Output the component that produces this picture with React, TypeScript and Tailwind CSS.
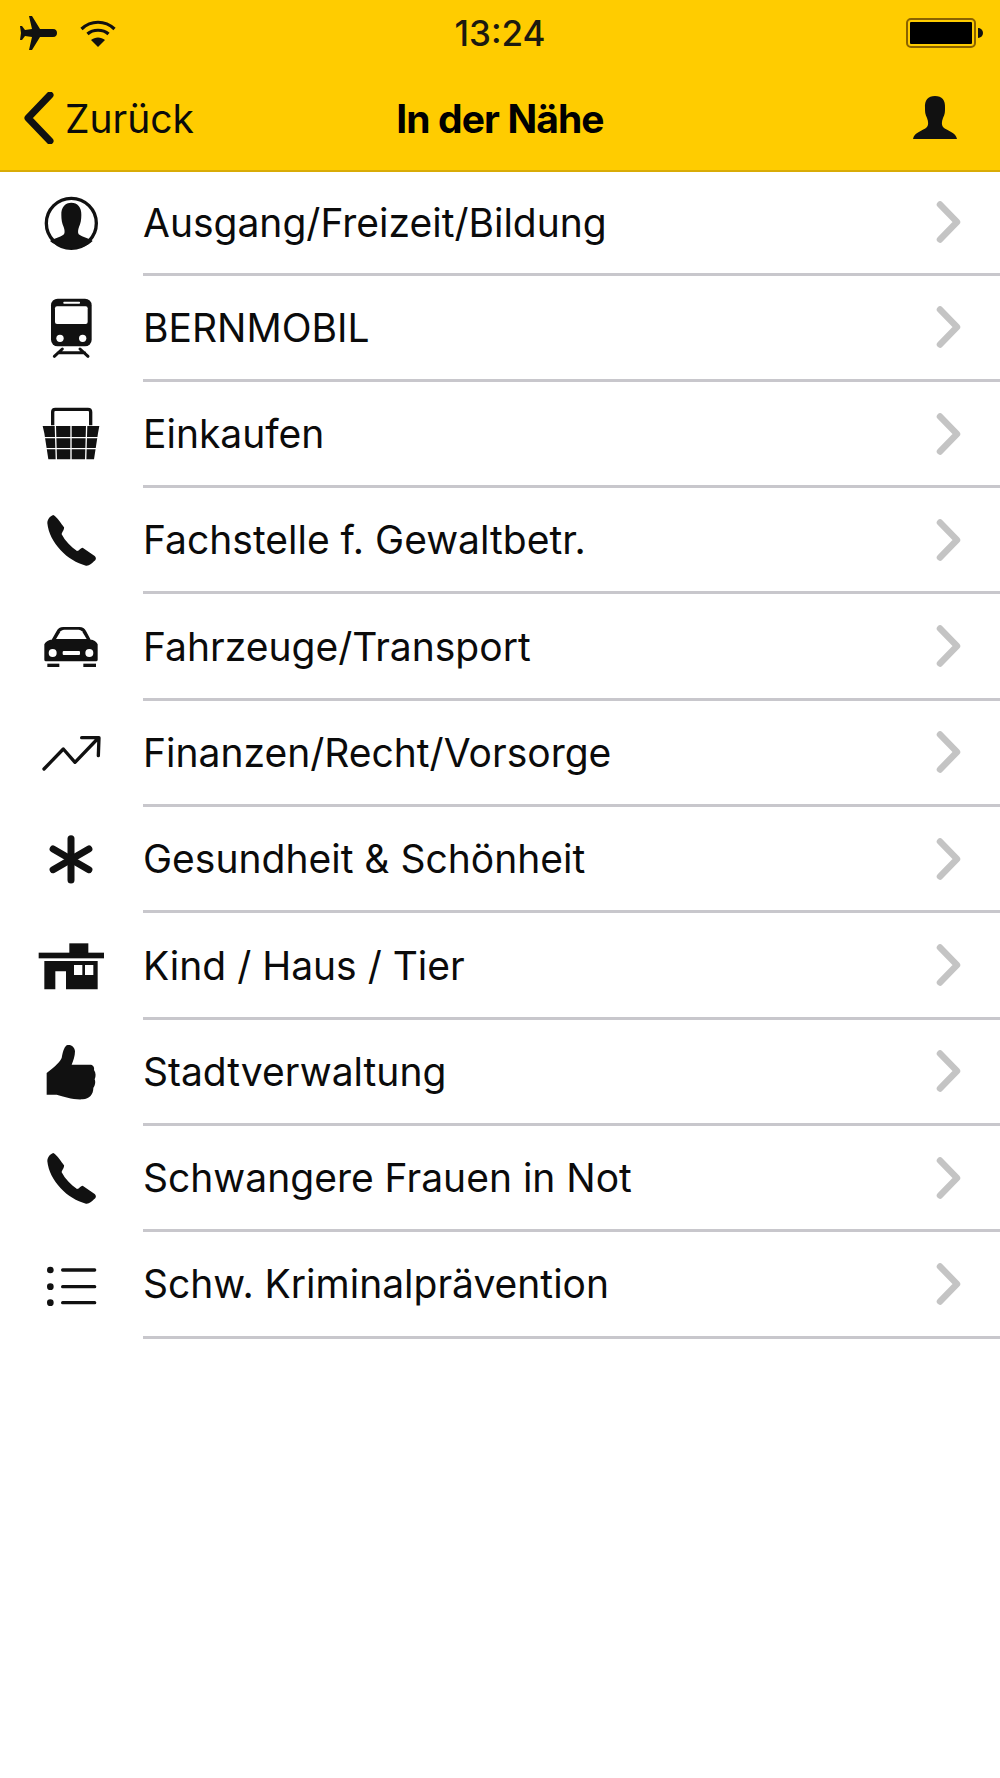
import React from "react";

const F = "[font-family:Inter,'Liberation_Sans',sans-serif]";

const Svg = ({ children }: { children: React.ReactNode }) => (
  <svg viewBox="0 0 210 210" width="70" height="70" className="block" fill="#111">
    {children}
  </svg>
);

const Phone = () => (
  <Svg>
    <path d="M52 27 C58 30 64 36 84 64 C86 70 78 78 77 85 C88 106 104 122 123 135 C130 134 134 125 140 125 L176 150 C182 156 180 162 174 166 C166 174 160 180 150 179 C95 166 40 110 34 52 C34 40 42 30 52 27 Z" />
  </Svg>
);

const PersonRing = () => (
  <Svg>
    <circle cx="106" cy="103" r="75" fill="none" stroke="#111" strokeWidth="10" />
    <path d="M106 41 C124 41 137 54 136 78 C136 92 134 104 129 114 C126 122 125 130 128 136 C140 145 160 148 170 156 C155 172 130 178 106 178 C82 178 58 170 42 156 C54 148 74 145 84 136 C87 130 86 122 83 114 C78 104 76 92 76 78 C75 54 88 41 106 41 Z" />
  </Svg>
);

const Train = () => (
  <Svg>
    <rect x="45" y="14" width="122" height="143" rx="20" />
    <rect x="57" y="37" width="98" height="53" rx="6" fill="#fff" />
    <rect x="82" y="23" width="50" height="6" rx="2" fill="#fff" />
    <circle cx="72" cy="133" r="11" fill="#fff" />
    <circle cx="140" cy="133" r="11" fill="#fff" />
    <path d="M55 187 L79 165 M156 187 L132 165 M66 176 H146" stroke="#111" strokeWidth="9" strokeLinecap="round" fill="none" />
  </Svg>
);

const Basket = () => (
  <Svg>
    <path d="M50 76 V36 Q50 28 58 28 H156 Q164 28 164 36 V76" fill="none" stroke="#111" strokeWidth="10" />
    <path d="M20 78 H190 L186 100 L174 178 H37 L25 100 Z" />
    <path d="M58 76 L61 180 M105 76 V180 M152 76 L149 180 M20 113 H190 M20 146 H190" stroke="#fff" strokeWidth="4" fill="none" />
  </Svg>
);

const Car = () => (
  <Svg>
    <path d="M25 94 C28 86 40 80 47 80 L62 54 C66 46 72 42 82 42 H130 C140 42 146 46 150 54 L164 80 C172 80 182 86 185 94 V140 Q185 145 180 145 H30 Q25 145 25 140 Z" />
    <path d="M60 78 L74 55 Q78 50 84 50 H128 Q134 50 138 55 L152 78 Z" fill="#fff" />
    <circle cx="50" cy="120" r="12" fill="#fff" />
    <circle cx="160" cy="120" r="12" fill="#fff" />
    <rect x="80" y="114" width="52" height="12" rx="3" fill="#fff" />
    <rect x="34" y="152" width="36" height="10" />
    <rect x="142" y="152" width="38" height="10" />
  </Svg>
);

const Trend = () => (
  <Svg>
    <path d="M24 150 L82 90 L117 130 L187 57 M137 56 H189 L187 110" fill="none" stroke="#111" strokeWidth="10" strokeLinecap="round" strokeLinejoin="round" />
  </Svg>
);

const Star = () => (
  <Svg>
    <g stroke="#111" strokeWidth="21" strokeLinecap="round">
      <path d="M105 41 V165" />
      <path d="M105 41 V165" transform="rotate(60 105 103)" />
      <path d="M105 41 V165" transform="rotate(120 105 103)" />
    </g>
  </Svg>
);

const House = () => (
  <Svg>
    <rect x="100" y="34" width="57" height="30" />
    <rect x="8" y="62" width="196" height="17" />
    <path fillRule="evenodd" d="M25 87 H185 V172 H90 V118 H58 V172 H25 Z M114 99 V129 H139 V99 Z M147 99 V129 H172 V99 Z" />
  </Svg>
);

const Thumb = () => (
  <Svg>
    <path d="M32 105 C50 90 68 78 77 60 C80 44 84 28 92 22 C104 18 116 26 117 40 C117 54 112 68 107 80 L162 80 C172 80 176 88 174 96 C180 104 180 116 176 124 C180 134 176 144 172 150 C172 170 160 182 140 184 C112 186 84 176 62 170 L32 170 Z" />
  </Svg>
);

const List = () => (
  <Svg>
    <circle cx="43" cy="60" r="10" />
    <circle cx="43" cy="110" r="10" />
    <circle cx="43" cy="158" r="10" />
    <path d="M80 60 H176 M80 110 H176 M80 158 H176" stroke="#111" strokeWidth="10" strokeLinecap="round" />
  </Svg>
);

const rows: { label: string; icon: React.ReactNode }[] = [
  { label: "Ausgang/Freizeit/Bildung", icon: <PersonRing /> },
  { label: "BERNMOBIL", icon: <Train /> },
  { label: "Einkaufen", icon: <Basket /> },
  { label: "Fachstelle f. Gewaltbetr.", icon: <Phone /> },
  { label: "Fahrzeuge/Transport", icon: <Car /> },
  { label: "Finanzen/Recht/Vorsorge", icon: <Trend /> },
  { label: "Gesundheit & Schönheit", icon: <Star /> },
  { label: "Kind / Haus / Tier", icon: <House /> },
  { label: "Stadtverwaltung", icon: <Thumb /> },
  { label: "Schwangere Frauen in Not", icon: <Phone /> },
  { label: "Schw. Kriminalprävention", icon: <List /> },
];

export default function App() {
  return (
    <div className={`w-[1000px] h-[1778px] bg-white text-[#0b0b0b] overflow-hidden ${F}`}>
      <header className="h-[172px] bg-[#ffcc00] border-b-2 border-[#d9ac06]">
        <div className="h-[66px] grid grid-cols-[1fr_auto_1fr] items-center px-5">
          <div className="flex items-center gap-[23px]">
            <svg width="37" height="34" viewBox="0 0 37 34" fill="#111" className="block">
              <path d="M9 0 L12 0 L20 13 L33 13 C36 13 37 15 37 17 C37 19 36 21 33 21 L20 21 L12 34 L9 34 L12 21 L5 20 L2 24 L0 24 L1 17 L0 10 L2 10 L5 14 L12 13 Z" />
            </svg>
            <svg width="36" height="27" viewBox="0 0 36 27" fill="none" stroke="#111" strokeWidth="3.2" className="block">
              <path d="M1.5 9 C11 0 25 0 34.500 9" />
              <path d="M7.500 14 C13 9 23 9 28.500 14" />
              <path d="M11 20 L18 27 L25 20 C21 16.500 15 16.500 11 20 Z" fill="#111" stroke="none" />
            </svg>
          </div>
          <div className="text-[35px] font-medium leading-none text-[#1c1a10]">13:24</div>
          <div className="flex justify-end items-center -mr-[3px]">
            <div className="w-[70px] h-[30px] rounded-[5px] border-2 border-[#8a6200] p-[2px]">
              <div className="w-full h-full bg-black rounded-[1px]" />
            </div>
            <div className="ml-[2px] w-[5px] h-[10px] bg-[#111] rounded-r-full" />
          </div>
        </div>
        <div className="h-[104px] grid grid-cols-[1fr_auto_1fr] items-center px-6">
          <div className="flex items-center gap-[11px]">
            <svg width="30" height="52" viewBox="0 0 30 52" fill="none" stroke="#111" strokeWidth="7" strokeLinecap="round" strokeLinejoin="round" className="block">
              <path d="M26 3 L4 26 L26 49" />
            </svg>
            <span className="text-[39px] leading-none">Zurück</span>
          </div>
          <div className="text-[39px] font-bold leading-none tracking-[-0.9px] text-black">In der Nähe</div>
          <div className="flex justify-end pr-[19px]">
            <svg width="44" height="44" viewBox="0 0 44 44" fill="#111" className="block">
              <path d="M22 0 C29 0 32.500 4 32 12 C32 16 32 18 30 22 C28.500 26 28.500 29 30 31 C34 35 43 36 44 43 H0 C1 36 10 35 14 31 C15.500 29 15.500 26 14 22 C12 18 12 16 12 12 C11.500 4 15 0 22 0 Z" />
            </svg>
          </div>
        </div>
      </header>
      <ul>
        {rows.map((r) => (
          <li key={r.label} className="flex h-[106.3px] first:h-[103.6px]">
            <div className="ml-9 mr-[37px] w-[70px] shrink-0 flex items-center">{r.icon}</div>
            <div className="flex-1 flex items-center justify-between border-b-[3px] border-[#c8c7cc] pr-[38px]">
              <span className="text-[39px] leading-none">{r.label}</span>
              <svg width="28" height="46" viewBox="0 0 28 46" fill="none" stroke="#c4c4c4" strokeWidth="6.5" strokeLinecap="round" strokeLinejoin="round" className="block">
                <path d="M6 5.500 L23 23 L6 40.500" />
              </svg>
            </div>
          </li>
        ))}
      </ul>
    </div>
  );
}
